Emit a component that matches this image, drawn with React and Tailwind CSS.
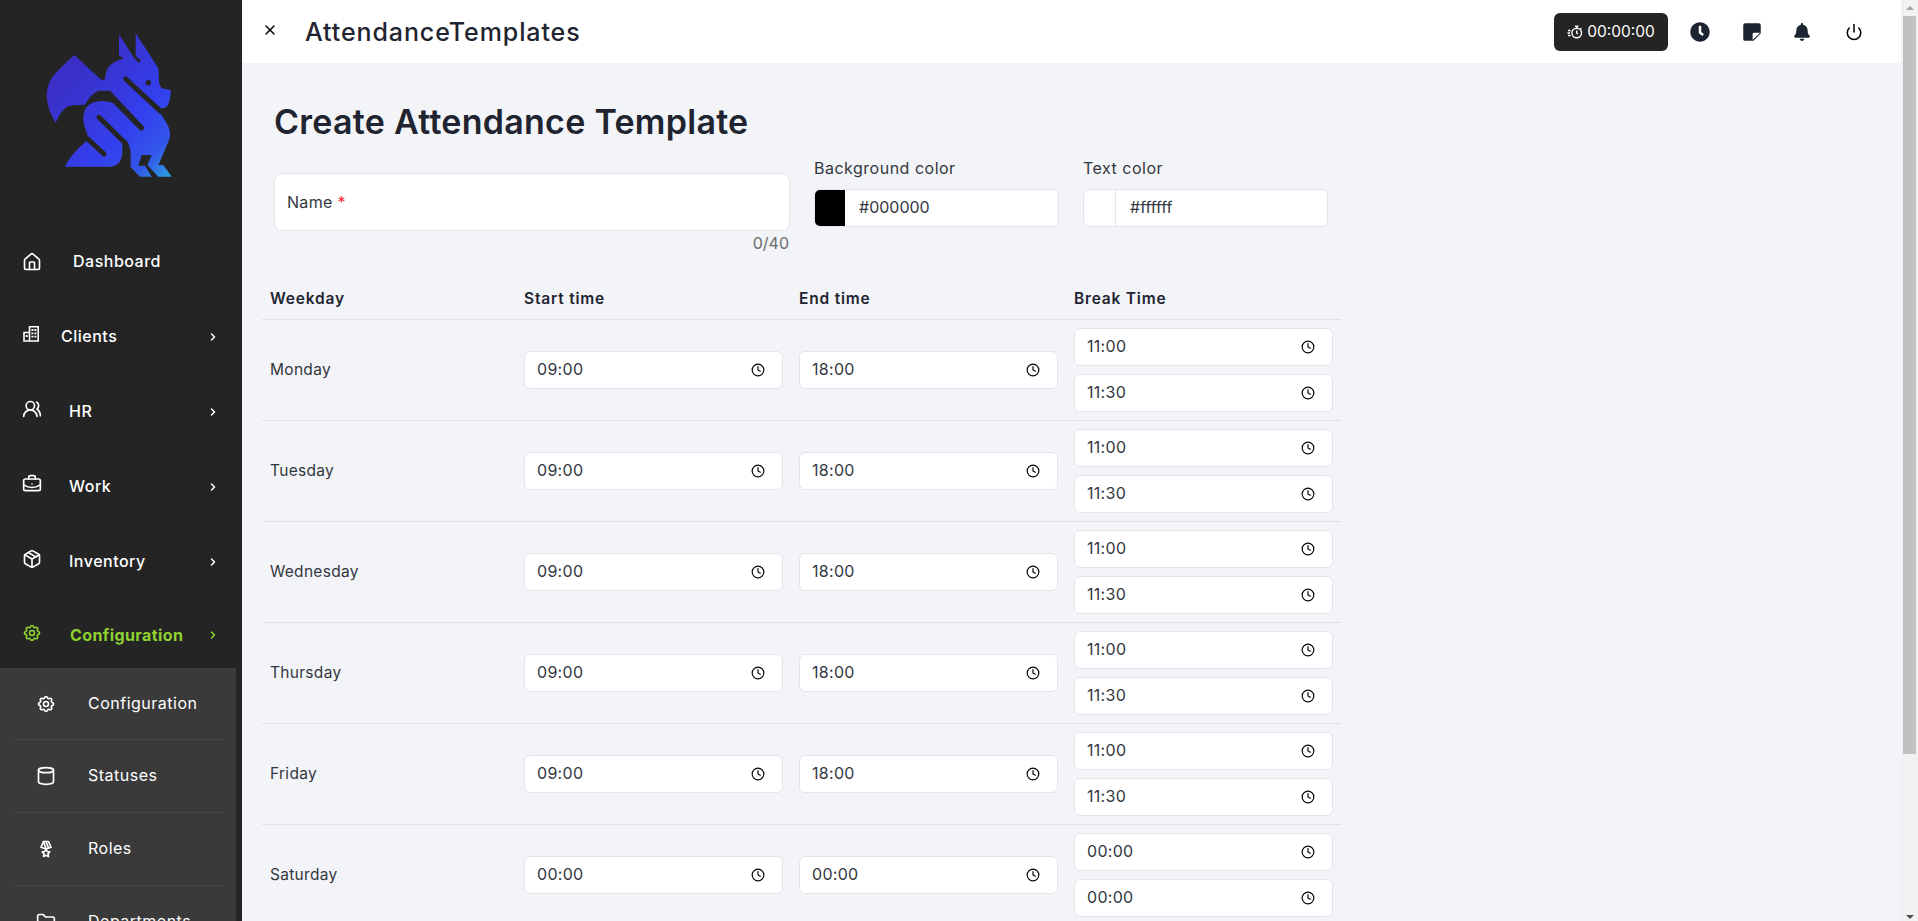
import {
  House,
  UsersRound,
  BriefcaseBusiness,
  Package,
  ChevronRight,
  Cylinder,
  Folder,
  Clock,
  Power,
  X,
} from "lucide-react";
import { TbSettings, TbMedal2 } from "react-icons/tb";
import { FaClock, FaBell } from "react-icons/fa";
import { BsStickyFill } from "react-icons/bs";

const Logo = () => (
  <svg viewBox="0 0 480 510" className="w-[160px] h-[170px]">
    <defs>
      <linearGradient id="logoGrad" gradientUnits="userSpaceOnUse" x1="110" y1="170" x2="430" y2="470">
        <stop offset="0" stopColor="#3a2fc6" />
        <stop offset="0.55" stopColor="#3440ee" />
        <stop offset="0.8" stopColor="#3356ea" />
        <stop offset="1" stopColor="#2aa9dc" />
      </linearGradient>
    </defs>
    <path
      fill="url(#logoGrad)"
      d="M267 43 L267 105 L280 116 Q245 122 232 148 Q225 162 225 178 L215 181 L133 105 Q85 148 68 170 Q50 195 50 228 Q52 270 77 308 Q92 272 112 260 Q122 254 165 254 Q178 225 205 212 L240 212 L340 318 Q346 328 336 332 Q330 332 325 326 L250 250 Q235 243 215 243 Q160 245 160 295 Q160 320 172 340 L167 365 Q120 405 105 440 L245 440 Q275 435 277 400 Q275 375 282 355 L292 365 Q302 385 302 400 L302 442 L330 470 L365 470 L345 437 L325 437 L335 405 L365 405 L352 435 L385 470 L425 470 L400 435 L385 435 L415 365 Q428 340 410 310 L380 262 Q395 268 410 260 Q422 245 422 210 L395 205 Q387 195 387 185 L385 145 L317 40 L317 105 Q320 115 330 118 Q336 124 326 128 L310 110 Z"
    />
    <g stroke="#242424" strokeWidth="15" fill="none">
      <path d="M287 177 L392 274" strokeLinecap="round" />
      <path d="M207 292 L288 372" strokeLinecap="round" />
      <path d="M160 345 L222 402" strokeLinecap="round" />
    </g>
    <circle cx="355" cy="188" r="8" fill="#242424" />
  </svg>
);

const BuildingIcon = () => (
  <svg width="18" height="18" viewBox="0 0 18 18" fill="none" stroke="currentColor" strokeWidth="1.6">
    <path d="M7.5 16V1.8h8.7V16zM2 16V7.5h5.5V16zM1.5 16h15" />
    <path d="M10.3 5h.2M13.3 5h.2M10.3 8.3h.2M13.3 8.3h.2M10.3 11.6h.2M13.3 11.6h.2M4.6 11h.2" strokeWidth="1.8" strokeLinecap="square" />
  </svg>
);

const TimerIcon = () => (
  <svg width="16" height="16" viewBox="0 0 16 16" fill="none" stroke="currentColor" strokeWidth="1.4">
    <circle cx="9.7" cy="9" r="4.8" />
    <path d="M8 2.2h3.4M9.7 2.2v2M9.7 6.5V9l1.2 1M13.4 4.2l1 1M1 6.5h2.6M.5 9h2.5M1 11.5h2.6" />
  </svg>
);

const navItems = [
  { label: "Dashboard", icon: <House size={20} />, textClass: "ml-[33px] -mt-[1px]", shift: "", arrow: false },
  { label: "Clients", icon: <BuildingIcon />, textClass: "ml-[21px] -mt-[2px]", shift: "-mt-[5px]", arrow: true },
  { label: "HR", icon: <UsersRound size={20} />, textClass: "ml-[29px] -mt-[2px]", shift: "-mt-[5px]", arrow: true },
  { label: "Work", icon: <BriefcaseBusiness size={20} />, textClass: "ml-[29px] -mt-[2px]", shift: "-mt-[5px]", arrow: true },
  { label: "Inventory", icon: <Package size={20} />, textClass: "ml-[29px] -mt-[2px]", shift: "-mt-[5px]", arrow: true },
];

const subItems = [
  { label: "Configuration", icon: <TbSettings size={20} /> },
  { label: "Statuses", icon: <Cylinder size={20} /> },
  { label: "Roles", icon: <TbMedal2 size={20} /> },
  { label: "Departments", icon: <Folder size={20} /> },
];

const days = [
  { name: "Monday", start: "09:00", end: "18:00", breaks: ["11:00", "11:30"] },
  { name: "Tuesday", start: "09:00", end: "18:00", breaks: ["11:00", "11:30"] },
  { name: "Wednesday", start: "09:00", end: "18:00", breaks: ["11:00", "11:30"] },
  { name: "Thursday", start: "09:00", end: "18:00", breaks: ["11:00", "11:30"] },
  { name: "Friday", start: "09:00", end: "18:00", breaks: ["11:00", "11:30"] },
  { name: "Saturday", start: "00:00", end: "00:00", breaks: ["00:00", "00:00"] },
  { name: "Sunday", start: "00:00", end: "00:00", breaks: ["00:00", "00:00"] },
];

const TimeField = ({ value }) => (
  <div className="flex items-center justify-between h-[38px] bg-white border border-[#e2e5ec] rounded-md pl-3 pr-[17px] text-[16px] text-[#33373f]">
    <span className="-mt-[2px]">{value}</span>
    <Clock size={14} className="text-black" strokeWidth={2} />
  </div>
);

const ColorField = ({ label, swatch, value, swatchClass }) => (
  <div className="w-[245px]">
    <div className="h-[22px] leading-[22px] text-[16px] tracking-[0.5px] text-[#33373f]">{label}</div>
    <div className="mt-[10px] flex h-[38px] bg-white border border-[#e2e5ec] rounded-md overflow-hidden">
      <div className={`${swatch} ${swatchClass} h-full`} />
      <div className="pl-[14px] leading-[35px] text-[16px] text-[#33373f]">{value}</div>
    </div>
  </div>
);

// headless chrome hides native scrollbars, so this one is plain markup
const ScrollBar = () => (
  <div className="w-[17px] shrink-0 h-screen flex flex-col bg-[#f1f1f1]">
    <div className="h-4 flex items-center justify-center">
      <svg width="8" height="4" viewBox="0 0 8 4">
        <polygon points="4,0 8,4 0,4" fill="#a3a3a3" />
      </svg>
    </div>
    <div className="h-[738px] mx-[2px] bg-[#c1c1c1]" />
    <div className="flex-1 flex items-end justify-center pb-[2px]">
      <svg width="8" height="4" viewBox="0 0 8 4">
        <polygon points="0,0 8,0 4,4" fill="#505050" />
      </svg>
    </div>
  </div>
);

const App = () => {
  return (
    <div className="flex h-screen overflow-hidden font-[Inter,sans-serif]">
      {/* Sidebar */}
      <aside className="w-[242px] shrink-0 h-screen overflow-hidden bg-[#242424] text-white">
        <div className="h-[224px] pt-5 pl-[30px]">
          <Logo />
        </div>
        {navItems.map((item) => (
          <div key={item.label} className="h-[75px] flex items-center pl-[23px] pr-[23px] text-[16px] tracking-[0.5px] font-medium">
            <span className={`w-[18px] -ml-px ${item.shift}`}>{item.icon}</span>
            <span className={`${item.textClass} flex-1`}>{item.label}</span>
            {item.arrow && <ChevronRight size={12} strokeWidth={3} />}
          </div>
        ))}
        <div className="h-[69px] pt-[3px] flex items-center pl-[23px] pr-[23px] text-[16px] tracking-[0.4px] font-bold text-[#8fd12f]">
          <span className="w-[18px] -ml-px -mt-[5px]">
            <TbSettings size={20} />
          </span>
          <span className="ml-[30px] flex-1">Configuration</span>
          <ChevronRight size={12} strokeWidth={3} />
        </div>
        <div className="w-[236px] bg-[#3a3a3a] px-3">
          {subItems.map((item) => (
            <div key={item.label} className="h-[73px] flex items-center pl-[25px] border-b border-[#454545] text-[16px] tracking-[0.5px] first:h-[72px]">
              <span className="w-[18px] -ml-px">{item.icon}</span>
              <span className="ml-[34px] -mt-[2px]">{item.label}</span>
            </div>
          ))}
        </div>
      </aside>

      {/* Page */}
      <div className="flex-1 min-w-0 h-screen overflow-hidden bg-[#f2f4f8]">
        <header className="h-[63px] bg-white flex items-center">
          <X size={16} strokeWidth={2.2} className="ml-5 -mt-[3px] text-black" />
          <h1 className="ml-[27px] mt-[3px] text-[25px] tracking-[0.9px] font-medium text-[#1f2430]">AttendanceTemplates</h1>
          <div className="ml-auto flex items-center pr-[38px] text-[#1e2532]">
            <div className="h-[38px] w-[114px] flex items-center justify-center gap-1 bg-[#242424] text-white rounded-md text-[15.5px]">
              <TimerIcon />
              <span>00:00:00</span>
            </div>
            <FaClock size={20} className="ml-[22px]" />
            <BsStickyFill size={20} className="ml-[32px]" />
            <FaBell size={18} className="ml-[31px]" />
            <Power size={18} className="ml-[34px] text-black" />
          </div>
        </header>

        <main className="pl-5">
          <div className="ml-3">
            <h2 className="mt-[35px] text-[34px] tracking-[0.27px] leading-[48px] font-semibold text-[#1f2430]">
              Create Attendance Template
            </h2>
            <div className="mt-[11px] flex items-start gap-[24px]">
              <div className="w-[516px] pt-4">
                <div className="h-[58px] bg-white border border-[#e2e5ec] rounded-lg flex items-center px-3 text-[16px] tracking-[0.3px] text-[#33373f]">
                  <span className="-mt-[1px]">
                    Name <span className="text-red-500">*</span>
                  </span>
                </div>
                <div className="mt-[2px] h-5 leading-5 text-right text-[16px] text-[#6b6b6b] pr-px">0/40</div>
              </div>
              <ColorField label="Background color" swatch="bg-black" swatchClass="w-[30px]" value="#000000" />
              <ColorField label="Text color" swatch="bg-white" swatchClass="w-[32px] border-r border-[#e2e5ec]" value="#ffffff" />
            </div>
          </div>

          <table className="mt-[23px] w-[1079px] table-fixed border-collapse text-[15.5px] tracking-[0.3px] text-[#33373f]">
            <colgroup>
              <col className="w-[254px]" />
              <col className="w-[275px]" />
              <col className="w-[275px]" />
              <col className="w-[275px]" />
            </colgroup>
            <thead>
              <tr className="h-[43px] border-b border-[#dfe2e8] text-left text-[#1f2430]">
                <th className="pl-2 pt-[2px] font-semibold tracking-[0.8px]">Weekday</th>
                <th className="pl-2 pt-[2px] font-semibold tracking-[0.8px]">Start time</th>
                <th className="pl-2 pt-[2px] font-semibold tracking-[0.8px]">End time</th>
                <th className="pl-2 pt-[2px] font-semibold tracking-[0.8px]">Break Time</th>
              </tr>
            </thead>
            <tbody>
              {days.map((day) => (
                <tr key={day.name} className="border-b border-[#dfe2e8]">
                  <td className="pl-2">{day.name}</td>
                  <td className="px-2">
                    <TimeField value={day.start} />
                  </td>
                  <td className="px-2">
                    <TimeField value={day.end} />
                  </td>
                  <td className="px-2 py-2">
                    <div className="flex flex-col gap-2">
                      {day.breaks.map((b) => (
                        <TimeField key={b} value={b} />
                      ))}
                    </div>
                  </td>
                </tr>
              ))}
            </tbody>
          </table>
        </main>
      </div>
      <ScrollBar />
    </div>
  );
};

export default App;
